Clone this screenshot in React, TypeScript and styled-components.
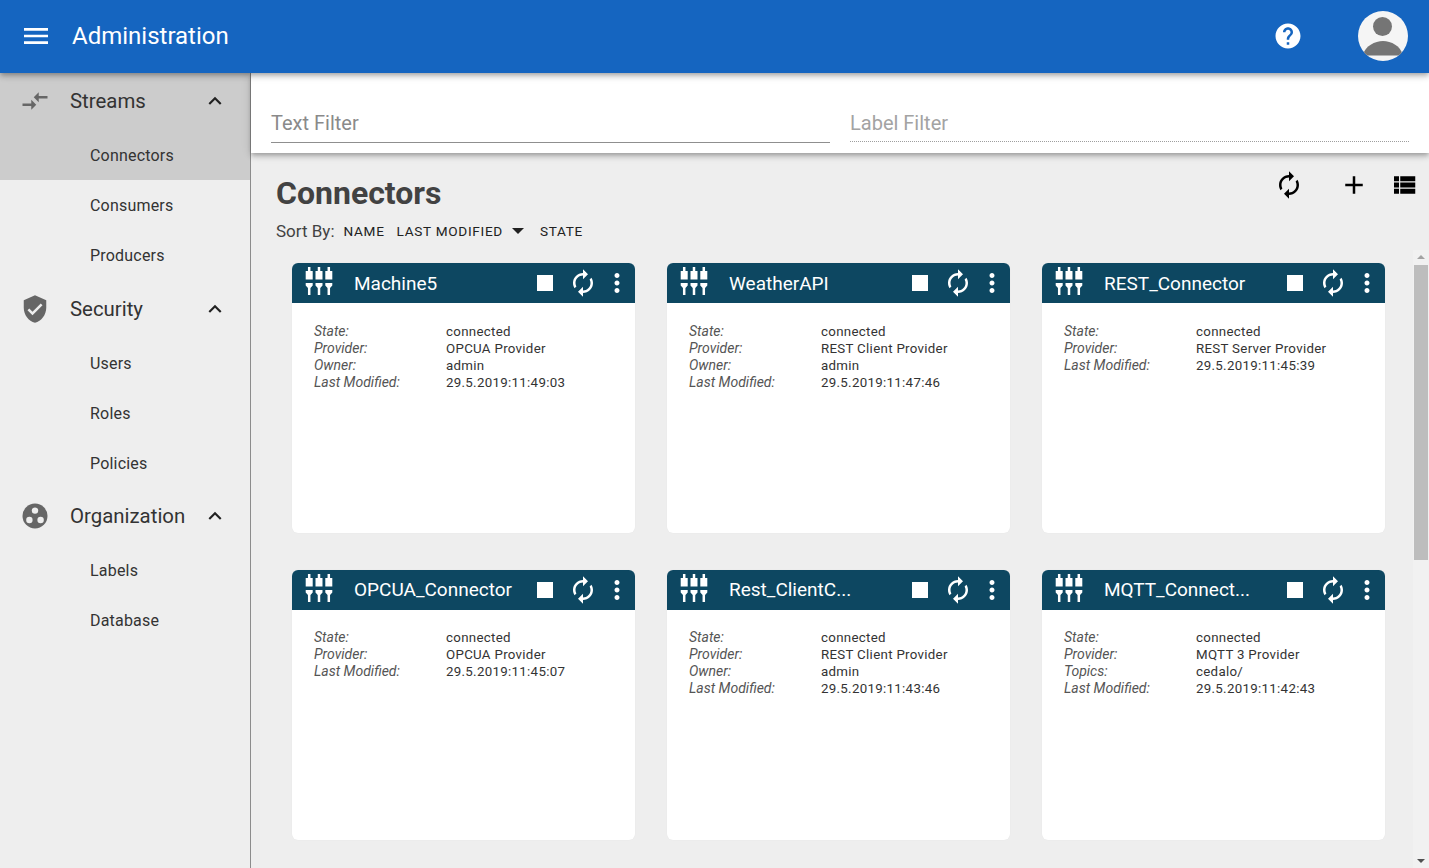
import React from "react";
import styled, { createGlobalStyle } from "styled-components";

const Global = createGlobalStyle`
  html, body { margin: 0; padding: 0; height: 100%; overflow: hidden; }
  body { font-family: Roboto, "Liberation Sans", sans-serif; background: #eeeeee; color: #212121; }
  * { box-sizing: border-box; }
`;

const Page = styled.div`
  height: 868px;
  display: flex;
  flex-direction: column;
  overflow: hidden;
`;
const AppBar = styled.header`
  flex: 0 0 73px;
  background: #1565c0;
  display: flex;
  align-items: center;
  padding: 0 21px 2px 20px;
  color: #fff;
  position: relative;
  z-index: 3;
  box-shadow: 0 2px 4px -1px rgba(0,0,0,.2), 0 4px 5px rgba(0,0,0,.14), 0 1px 10px rgba(0,0,0,.12);
`;
const AppTitle = styled.h1`
  margin: 0 0 0 20px;
  font-size: 24px;
  font-weight: 400;
  flex: 1;
`;
const Avatar = styled.div`
  width: 50px;
  height: 50px;
  border-radius: 50%;
  background: #f5f5f5;
  margin-left: 55px;
  overflow: hidden;
  display: flex;
`;
const Body = styled.div`
  flex: 1;
  display: flex;
  min-height: 0;
`;
const Sidebar = styled.nav`
  flex: 0 0 251px;
  background: #eeeeee;
  border-right: 1px solid #8c8c8c;
`;
const GroupRow = styled.div<{ $active?: boolean; $h: number }>`
  height: ${(p) => p.$h}px;
  display: flex;
  align-items: center;
  padding: 0 22px ${(p) => 58 - p.$h}px 20px;
  font-size: 20.4px;
  color: #333;
  background: ${(p) => (p.$active ? "#cccccc" : "transparent")};
`;
const GroupIcon = styled.span`
  width: 30px;
  height: 30px;
  display: flex;
  color: #666;
  margin-right: 20px;
`;
const GroupLabel = styled.span`
  flex: 1;
`;
const SubRow = styled.div<{ $active?: boolean }>`
  height: 50px;
  display: flex;
  align-items: center;
  padding-left: 90px;
  font-size: 16px;
  letter-spacing: 0.2px;
  color: #333;
  background: ${(p) => (p.$active ? "#cccccc" : "transparent")};
`;
const Main = styled.main`
  flex: 1;
  min-width: 0;
  display: flex;
  flex-direction: column;
  position: relative;
`;
const FilterBar = styled.div`
  flex: 0 0 80px;
  background: #fff;
  display: grid;
  grid-template-columns: 1fr 1fr;
  align-items: start;
  gap: 20px;
  padding: 0 20px;
  position: relative;
  z-index: 2;
  box-shadow: 0 2px 4px -1px rgba(0,0,0,.2), 0 4px 5px rgba(0,0,0,.14), 0 1px 10px rgba(0,0,0,.12);
`;
const FilterField = styled.div<{ $disabled?: boolean }>`
  height: ${(p) => (p.$disabled ? 69 : 70)}px;
  display: flex;
  align-items: flex-end;
  padding-bottom: ${(p) => (p.$disabled ? 6 : 7)}px;
  font-size: 20px;
  line-height: 24px;
  color: ${(p) => (p.$disabled ? "#a3a3a3" : "#8a8a8a")};
  border-bottom: ${(p) => (p.$disabled ? "1px dotted #9e9e9e" : "1px solid #8f8f8f")};
`;
const Heading = styled.div`
  flex: 0 0 97px;
  padding: 21px 10px 0 25px;
  display: flex;
  justify-content: space-between;
`;
const Title = styled.h2`
  margin: 0;
  font-size: 32px;
  line-height: 38px;
  font-weight: 700;
  color: #424242;
`;
const SortRow = styled.div`
  display: flex;
  align-items: center;
  height: 20px;
  margin-top: 9px;
  font-size: 17px;
  color: #424242;
`;
const SortOption = styled.span<{ $gap: number }>`
  margin-left: ${(p) => p.$gap}px;
  font-size: 13.6px;
  letter-spacing: 0.7px;
  color: #212121;
`;
const Caret = styled.span`
  width: 0;
  height: 0;
  margin-left: 9px;
  border-left: 6.5px solid transparent;
  border-right: 6.5px solid transparent;
  border-top: 6.5px solid #212121;
`;
const Tools = styled.div`
  display: flex;
  align-items: flex-start;
  margin-top: -4px;
`;
const ToolIcon = styled.span<{ $gap: number }>`
  width: 30px;
  height: 30px;
  display: flex;
  margin-left: ${(p) => p.$gap}px;
  color: #000;
`;
const ScrollWrap = styled.div`
  flex: 1;
  min-height: 0;
  position: relative;
  overflow: hidden;
`;
const ScrollTrack = styled.div`
  position: absolute;
  top: 0;
  right: 0;
  bottom: 0;
  width: 16px;
  background: #f1f1f1;
  display: flex;
  flex-direction: column;
  align-items: center;
  justify-content: space-between;
  padding: 5px 0;
`;
const ScrollThumb = styled.div`
  position: absolute;
  top: 15px;
  left: 1px;
  right: 1px;
  height: 295px;
  background: #bdbdbd;
`;
const ArrowUp = styled.span`
  width: 0;
  height: 0;
  border-left: 4px solid transparent;
  border-right: 4px solid transparent;
  border-bottom: 4px solid #a3a3a3;
`;
const ArrowDown = styled.span`
  width: 0;
  height: 0;
  border-left: 4px solid transparent;
  border-right: 4px solid transparent;
  border-top: 4px solid #505050;
`;
const CardGrid = styled.div`
  display: grid;
  grid-template-columns: repeat(3, 343px);
  column-gap: 32px;
  row-gap: 36.6px;
  padding: 13px 0 0 41px;
  align-content: start;
`;
const Card = styled.article`
  height: 270px;
  background: #fff;
  border-radius: 6px;
  overflow: hidden;
  box-shadow: 0 0 1px rgba(0,0,0,.08);
`;
const CardHeader = styled.div`
  height: 40px;
  background: #0d4761;
  color: #fff;
  display: flex;
  align-items: center;
  padding: 0 7px 0 12px;
`;
const CardIcon = styled.span`
  width: 30px;
  height: 30px;
  margin-top: -4px;
  display: flex;
`;
const CardTitle = styled.span`
  margin-left: 20px;
  flex: 1;
  font-size: 19px;
  white-space: nowrap;
`;
const HeaderBtn = styled.span<{ $w: number }>`
  width: ${(p) => p.$w}px;
  height: 30px;
  display: flex;
  align-items: center;
  justify-content: center;
`;
const Stop = styled.span`
  width: 16px;
  height: 16px;
  background: #fff;
`;
const Info = styled.dl`
  margin: 19.8px 0 0 22px;
  display: grid;
  grid-template-columns: 132px 1fr;
  grid-auto-rows: 17px;
  line-height: 17px;
`;
const Key = styled.dt`
  font-style: italic;
  font-size: 14px;
  color: #555;
`;
const Val = styled.dd`
  margin: 0;
  font-size: 13.3px;
  letter-spacing: 0.3px;
  color: #333;
`;

const P = ({ d, size = 30, fill = "currentColor" }: { d: string; size?: number; fill?: string }) => (
  <svg width={size} height={size} viewBox="0 0 24 24" fill={fill} style={{ display: "block", flexShrink: 0 }}>
    <path d={d} />
  </svg>
);
const MENU = "M3 18h18v-2H3v2zm0-5h18v-2H3v2zm0-7v2h18V6H3z";
const HELP = "M12 2C6.48 2 2 6.48 2 12s4.48 10 10 10 10-4.48 10-10S17.52 2 12 2zm1 17h-2v-2h2v2zm2.07-7.75l-.9.92C13.45 12.9 13 13.5 13 15h-2v-.5c0-1.1.45-2.1 1.17-2.83l1.24-1.26c.37-.36.59-.86.59-1.41 0-1.1-.9-2-2-2s-2 .9-2 2H8c0-2.21 1.79-4 4-4s4 1.79 4 4c0 .88-.36 1.68-.93 2.25z";
const COMPARE = "M9.01 14H2v2h7.01v3L13 15l-3.99-4v3zm5.98-1v-3H22V8h-7.01V5L11 9l3.99 4z";
const SHIELD = "M12 1L3 5v6c0 5.55 3.84 10.74 9 12 5.16-1.26 9-6.45 9-12V5l-9-4zm-2 16l-4-4 1.41-1.41L10 14.17l6.59-6.59L18 9l-8 8z";
const UP = "M7.41 15.41L12 10.83l4.59 4.58L18 14l-6-6-6 6z";
const RENEW = "M12 6v3l4-4-4-4v3c-4.42 0-8 3.58-8 8 0 1.57.46 3.03 1.24 4.26L6.7 14.8c-.45-.83-.7-1.79-.7-2.8 0-3.31 2.69-6 6-6zm6.76 1.74L17.3 9.2c.44.84.7 1.79.7 2.8 0 3.31-2.69 6-6 6v-3l-4 4 4 4v-3c4.42 0 8-3.58 8-8 0-1.57-.46-3.03-1.24-4.26z";
const PLUS = "M19 13h-6v6h-2v-6H5v-2h6V5h2v6h6v2z";
const LIST = "M4 14h4v-4H4v4zm0 5h4v-4H4v4zM4 9h4V5H4v4zm5 5h12v-4H9v4zm0 5h12v-4H9v4zM9 5v4h12V5H9z";
const DOTS = "M12 8c1.1 0 2-.9 2-2s-.9-2-2-2-2 .9-2 2 .9 2 2 2zm0 2c-1.1 0-2 .9-2 2s.9 2 2 2 2-.9 2-2-.9-2-2-2zm0 6c-1.1 0-2 .9-2 2s.9 2 2 2 2-.9 2-2-.9-2-2-2z";

const OrgIcon = () => (
  <svg width="30" height="30" viewBox="0 0 30 30" style={{ display: "block" }}>
    <circle cx="15" cy="15" r="12.5" fill="currentColor" />
    <circle cx="15" cy="9.6" r="3.2" fill="#eee" />
    <circle cx="9.4" cy="19" r="3.2" fill="#eee" />
    <circle cx="20.6" cy="19" r="3.2" fill="#eee" />
  </svg>
);

const PlugIcon = () => (
  <svg width="30" height="30" viewBox="0 0 30 30" fill="#fff" style={{ display: "block" }}>
    {[5.2, 15, 24.8].map((c) => (
      <g key={c}>
        <rect x={c - 1.25} y="1" width="2.5" height="4" />
        <rect x={c - 3.5} y="5" width="7" height="8.5" />
        <path d={`M${c - 3.5} 17h7v2.6l-2.25 2.4v7h-2.5v-7l-2.25-2.4z`} />
      </g>
    ))}
  </svg>
);

const UserIcon = () => (
  <svg width="50" height="50" viewBox="0 0 50 50" style={{ display: "block" }}>
    <circle cx="24.5" cy="15.5" r="9.5" fill="#757575" />
    <path d="M5 44c2-9 12-14 20-14s18 5 19.5 14L44 44.5H5z" fill="#757575" />
  </svg>
);

interface C { name: string; rows: [string, string][]; }
const cards: C[] = [
  { name: "Machine5", rows: [["State:", "connected"], ["Provider:", "OPCUA Provider"], ["Owner:", "admin"], ["Last Modified:", "29.5.2019:11:49:03"]] },
  { name: "WeatherAPI", rows: [["State:", "connected"], ["Provider:", "REST Client Provider"], ["Owner:", "admin"], ["Last Modified:", "29.5.2019:11:47:46"]] },
  { name: "REST_Connector", rows: [["State:", "connected"], ["Provider:", "REST Server Provider"], ["Last Modified:", "29.5.2019:11:45:39"]] },
  { name: "OPCUA_Connector", rows: [["State:", "connected"], ["Provider:", "OPCUA Provider"], ["Last Modified:", "29.5.2019:11:45:07"]] },
  { name: "Rest_ClientC...", rows: [["State:", "connected"], ["Provider:", "REST Client Provider"], ["Owner:", "admin"], ["Last Modified:", "29.5.2019:11:43:46"]] },
  { name: "MQTT_Connect...", rows: [["State:", "connected"], ["Provider:", "MQTT 3 Provider"], ["Topics:", "cedalo/"], ["Last Modified:", "29.5.2019:11:42:43"]] },
];

const Group = ({ icon, label, items, active, rowHeight = 57 }: { icon: React.ReactNode; label: string; items: string[]; active?: boolean; rowHeight?: number }) => (
  <section>
    <GroupRow $active={active} $h={rowHeight}>
      <GroupIcon>{icon}</GroupIcon>
      <GroupLabel>{label}</GroupLabel>
      <P d={UP} size={26} fill="#212121" />
    </GroupRow>
    {items.map((i, n) => (
      <SubRow key={i} $active={active && n === 0}>{i}</SubRow>
    ))}
  </section>
);

export default function App() {
  return (
    <Page>
      <Global />
      <AppBar>
        <P d={MENU} size={32} />
        <AppTitle>Administration</AppTitle>
        <P d={HELP} size={30} />
        <Avatar><UserIcon /></Avatar>
      </AppBar>
      <Body>
        <Sidebar>
          <Group icon={<P d={COMPARE} />} label="Streams" items={["Connectors", "Consumers", "Producers"]} active />
          <Group icon={<P d={SHIELD} />} label="Security" items={["Users", "Roles", "Policies"]} rowHeight={58} />
          <Group icon={<OrgIcon />} label="Organization" items={["Labels", "Database"]} />
        </Sidebar>
        <Main>
          <FilterBar>
            <FilterField>Text Filter</FilterField>
            <FilterField $disabled>Label Filter</FilterField>
          </FilterBar>
          <Heading>
            <div>
              <Title>Connectors</Title>
              <SortRow>
                Sort By:
                <SortOption $gap={9}>NAME</SortOption>
                <SortOption $gap={12}>LAST MODIFIED</SortOption>
                <Caret />
                <SortOption $gap={16}>STATE</SortOption>
              </SortRow>
            </div>
            <Tools>
              <ToolIcon $gap={0}><P d={RENEW} /></ToolIcon>
              <ToolIcon $gap={35}><P d={PLUS} /></ToolIcon>
              <ToolIcon $gap={20}><P d={LIST} /></ToolIcon>
            </Tools>
          </Heading>
          <ScrollWrap>
            <CardGrid>
              {cards.map((c) => (
                <Card key={c.name}>
                  <CardHeader>
                    <CardIcon><PlugIcon /></CardIcon>
                    <CardTitle>{c.name}</CardTitle>
                    <HeaderBtn $w={30}><Stop /></HeaderBtn>
                    <HeaderBtn $w={46}><P d={RENEW} /></HeaderBtn>
                    <HeaderBtn $w={22}><P d={DOTS} /></HeaderBtn>
                  </CardHeader>
                  <Info>
                    {c.rows.map(([k, v]) => (
                      <React.Fragment key={k}>
                        <Key>{k}</Key>
                        <Val>{v}</Val>
                      </React.Fragment>
                    ))}
                  </Info>
                </Card>
              ))}
            </CardGrid>
            <ScrollTrack>
              <ArrowUp />
              <ScrollThumb />
              <ArrowDown />
            </ScrollTrack>
          </ScrollWrap>
        </Main>
      </Body>
    </Page>
  );
}
